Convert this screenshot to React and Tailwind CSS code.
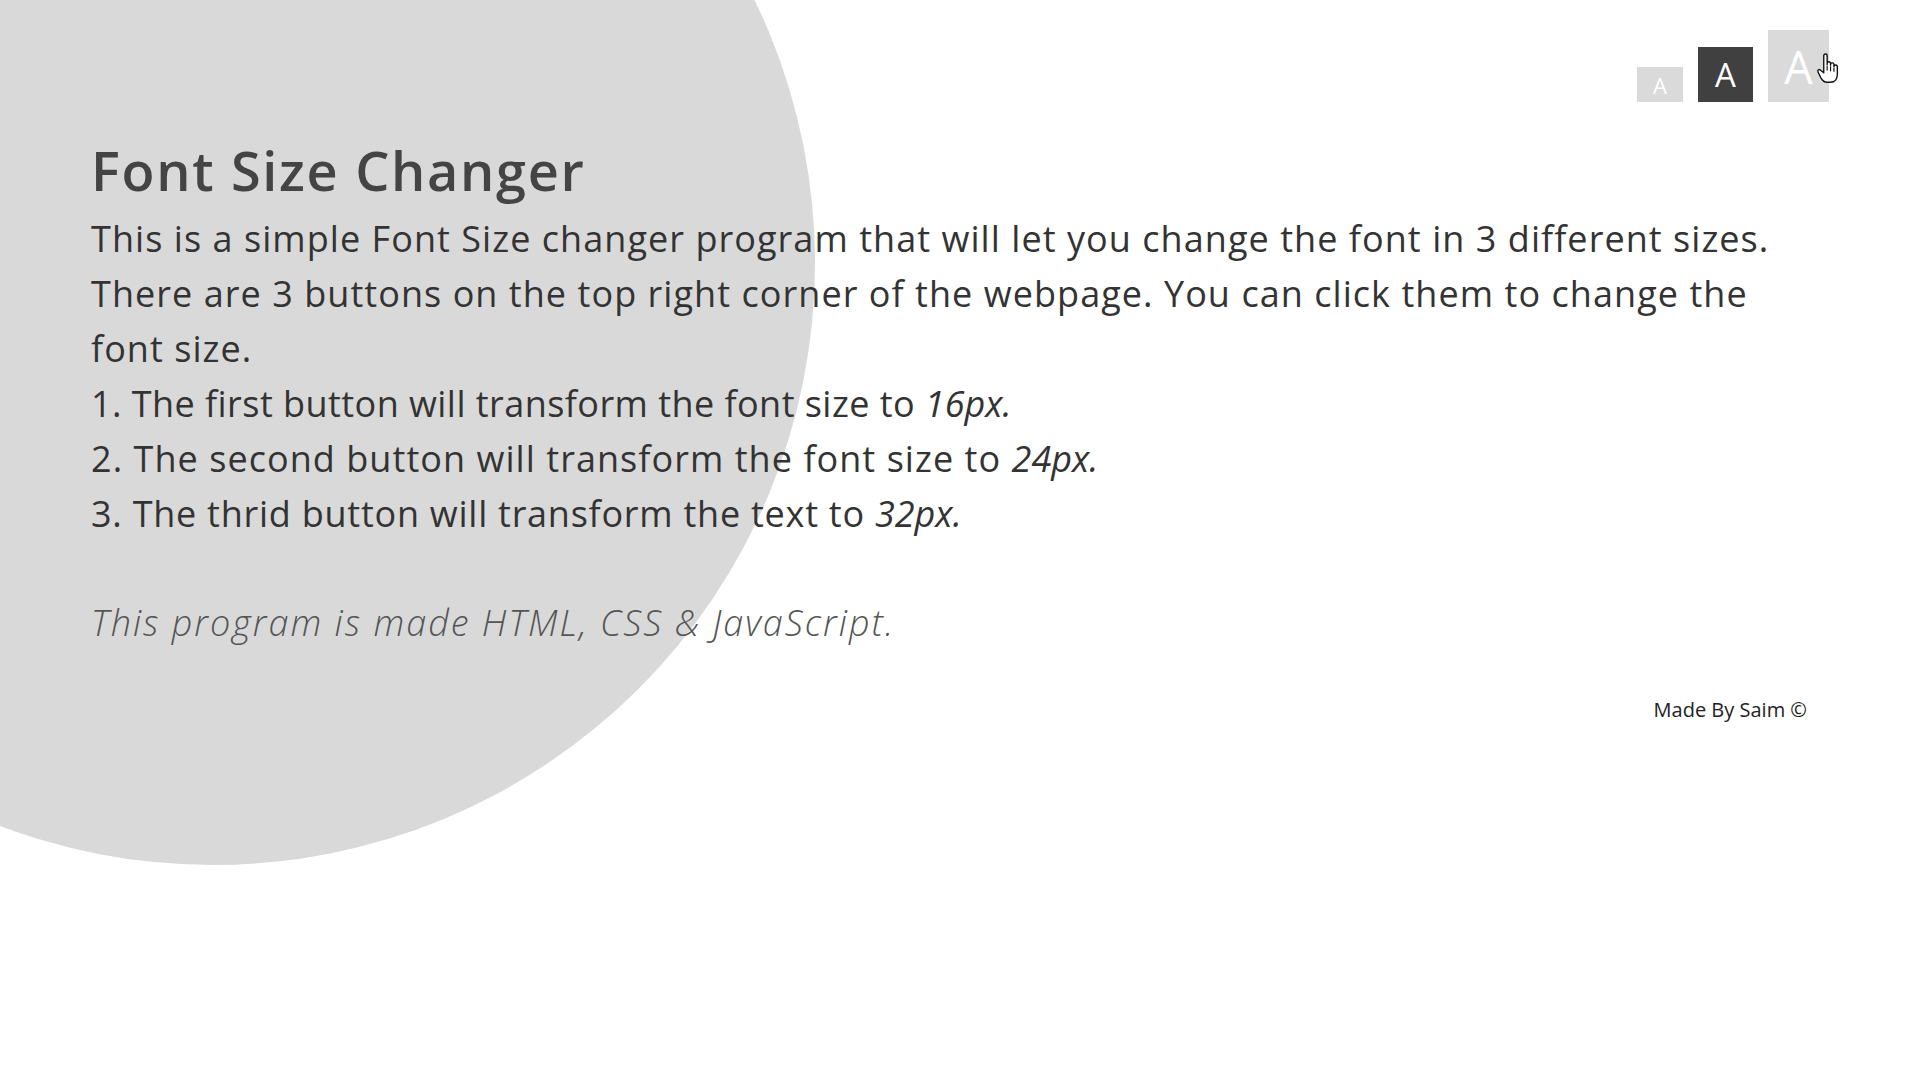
import { useState } from 'react';

// tamaños de texto para cada botón
const sizes = [
  {
    key: 'sm',
    btn: 'w-[46px] h-[35px] text-[22px]',
    body: 'text-[24px] leading-[37px] tracking-[0.7px]',
  },
  {
    key: 'md',
    btn: 'w-[55px] h-[55px] text-[33px]',
    body: 'text-[36px] leading-[55px] tracking-[1.05px]',
  },
  {
    key: 'lg',
    btn: 'w-[61px] h-[72px] text-[45px]',
    body: 'text-[48px] leading-[72px] tracking-[1.4px]',
  },
];

function HandCursor() {
  return (
    <svg
      viewBox="0 0 24 32"
      className="pointer-events-none absolute left-[1815px] top-[52px] h-[34px] w-[26px]"
    >
      <path
        d="M8 14 V3.5 a1.6 1.6 0 0 1 3.2 0 V12 V10.8 a1.6 1.6 0 0 1 3.2 0 V12.5 V11.8 a1.6 1.6 0 0 1 3.2 0 V13.5 V13.8 a1.6 1.6 0 0 1 3.2 0 V21 c0 4.2 -2.3 7.5 -6.4 7.5 h-3.2 c-2.6 0 -4.2 -1.1 -5.6 -3.6 L2.6 18.8 c-0.8 -1.4 0.8 -2.9 2.1 -1.9 L8 19.6 Z"
        fill="#fff"
        stroke="#111"
        strokeWidth="1.3"
        strokeLinejoin="round"
      />
      <path d="M11.2 13 v4.5 M14.4 13.5 v4.5 M17.6 14.5 v4" stroke="#111" strokeWidth="1.1" />
    </svg>
  );
}

export default function App() {
  const [active, setActive] = useState('md');
  const current = sizes.find((s) => s.key === active) ?? sizes[1];

  return (
    <div
      className="relative min-h-screen w-full overflow-hidden bg-white"
      style={{ fontFamily: '"Open Sans", "Liberation Sans", sans-serif' }}
    >
      {/* círculo de fondo */}
      <div className="absolute left-[-389px] top-[-339px] h-[1204px] w-[1204px] rounded-full bg-[#d9d9d9]" />

      <div className="relative px-[91px] pt-[30px]">
        {/* botones */}
        <div className="flex items-end justify-end gap-[15px]">
          {sizes.map((s) => (
            <button
              key={s.key}
              type="button"
              onClick={() => setActive(s.key)}
              className={[
                'flex items-center justify-center leading-none text-white',
                s.btn,
                s.key === active ? 'bg-[#404040]' : 'bg-[#dadada]',
              ].join(' ')}
            >
              A
            </button>
          ))}
        </div>

        <h1 className="mt-[41px] text-[54px] font-semibold leading-[54px] tracking-[1.7px] text-[#444]">
          Font Size Changer
        </h1>

        <div className={`mt-[14px] text-[#333] ${current.body}`}>
          <p className="whitespace-nowrap">
            This is a simple Font Size changer program that will let you change the font in 3 different sizes.
          </p>
          <p className="whitespace-nowrap">
            There are 3 buttons on the top right corner of the webpage. You can click them to change the
          </p>
          <p className="whitespace-nowrap">font size.</p>
          <p className="whitespace-nowrap tracking-[0.45px]">
            1. The first button will transform the font size to <em className="font-medium tracking-normal">16px.</em>
          </p>
          <p className="whitespace-nowrap">
            2. The second button will transform the font size to <em className="font-medium tracking-normal">24px.</em>
          </p>
          <p className="whitespace-nowrap tracking-[0.75px]">
            3. The thrid button will transform the text to <em className="font-medium tracking-normal">32px.</em>
          </p>
          <p className="mt-[54px] whitespace-nowrap font-light italic tracking-[2px] text-[#555]">
            This program is made HTML, CSS &amp; JavaScript.
          </p>
        </div>

        <div className="mt-[45px] flex justify-end pr-[22px] text-[20px] leading-[30px] text-[#222]">
          Made By Saim ©
        </div>
      </div>

      <HandCursor />
    </div>
  );
}
